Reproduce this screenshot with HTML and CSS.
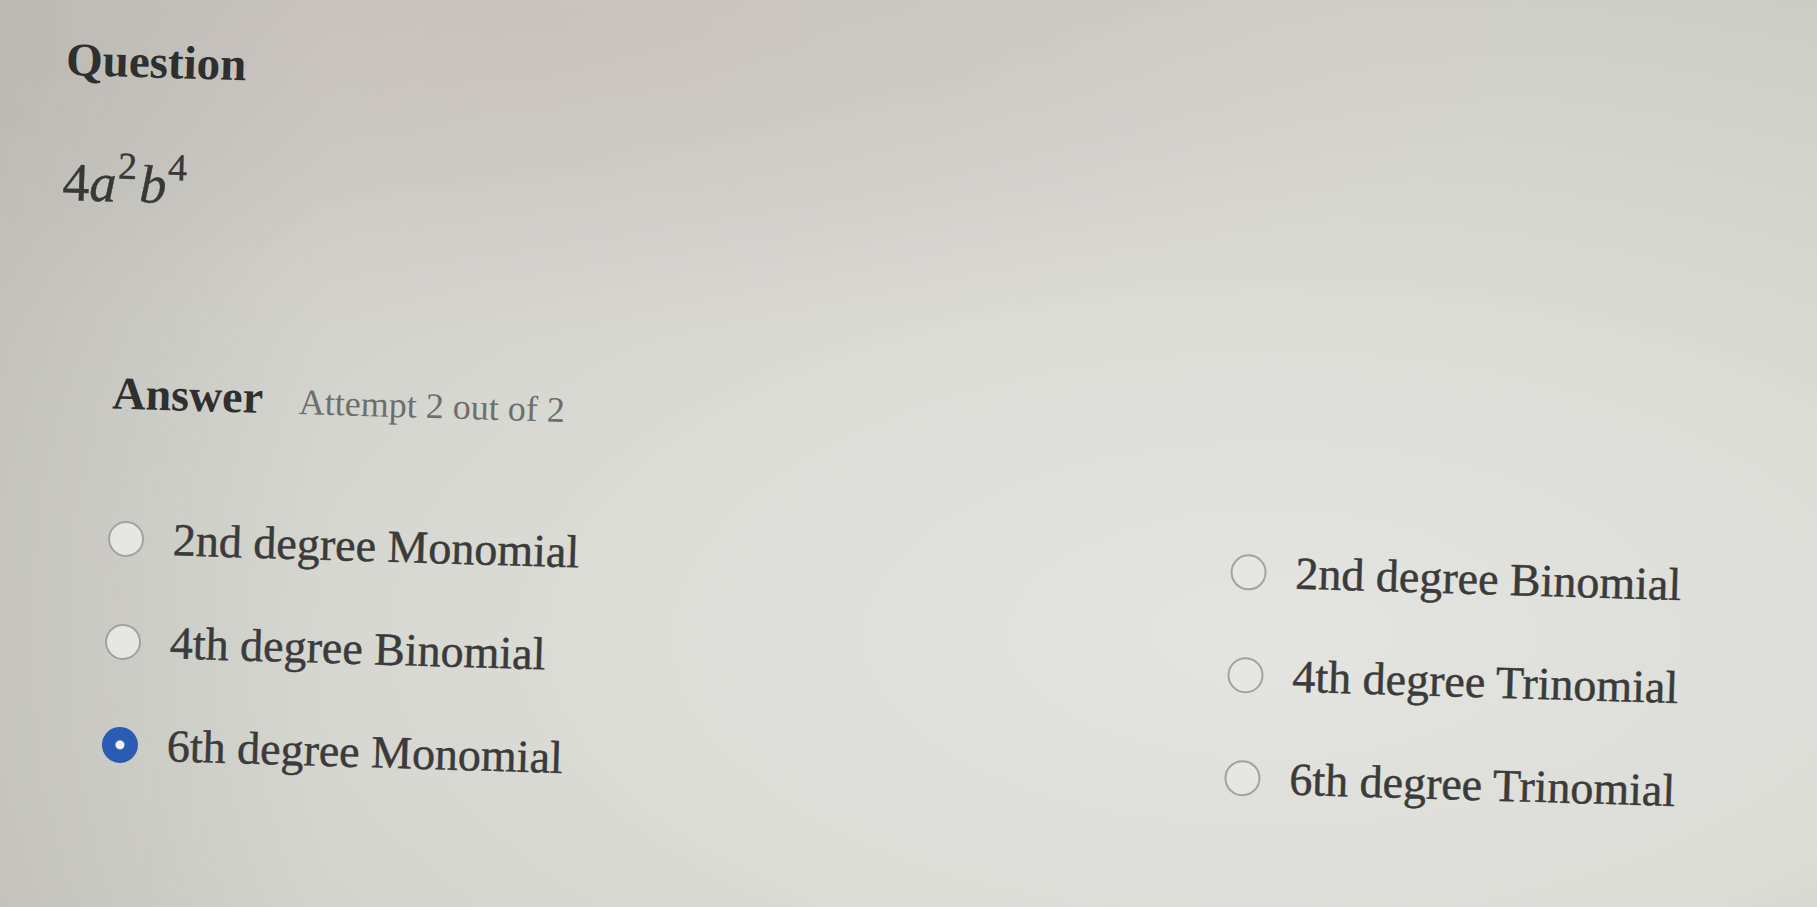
FILE: index.html
```html
<!DOCTYPE html>
<html lang="en">
<head>
<meta charset="utf-8">
<title>Question</title>
<link rel="stylesheet" href="styles.css">
</head>
<body>
<div class="page">
  <section class="question">
    <h2 class="label">Question</h2>
    <div class="math"><span class="num">4</span><i>a</i><sup>2</sup><i>b</i><sup>4</sup></div>
  </section>
  <section class="answer">
    <div class="answer-head">
      <h2 class="label">Answer</h2>
      <span class="attempt">Attempt 2 out of 2</span>
    </div>
    <div class="options">
      <label class="option"><span class="radio"></span><span class="text">2nd degree Monomial</span></label>
      <label class="option"><span class="radio"></span><span class="text">2nd degree Binomial</span></label>
      <label class="option"><span class="radio"></span><span class="text">4th degree Binomial</span></label>
      <label class="option"><span class="radio"></span><span class="text">4th degree Trinomial</span></label>
      <label class="option selected"><span class="radio"></span><span class="text">6th degree Monomial</span></label>
      <label class="option"><span class="radio"></span><span class="text">6th degree Trinomial</span></label>
    </div>
  </section>
</div>
</body>
</html>
```

FILE: styles.css
```css
html, body {
  margin: 0;
  padding: 0;
  height: 100%;
}

body {
  overflow: hidden;
  font-family: "Liberation Serif", "DejaVu Serif", serif;
  color: #353535;
  background:
    linear-gradient(90deg, rgba(160, 158, 152, 0.22) 0%, rgba(160, 158, 152, 0) 18%),
    radial-gradient(ellipse 55% 35% at 30% 3%, rgba(200, 192, 188, 0.7) 0%, rgba(200, 192, 188, 0) 100%),
    radial-gradient(ellipse 95% 90% at 70% 70%, #e4e4e0 0%, #dcdcd7 40%, #d0d0ca 75%, #c4c3bd 100%);
}

.page {
  padding: 34px 0 0 68px;
  transform: rotate(1.7deg);
  transform-origin: 0 0;
}

.label {
  margin: 0;
  font-size: 46px;
  line-height: 1;
  font-weight: 700;
  color: #2f2f2f;
}

.question .label {
  font-size: 47px;
}

.math {
  margin-top: 72px;
  font-size: 54px;
  line-height: 1;
  color: #383838;
  -webkit-text-stroke: 0.4px #383838;
}

.math i {
  font-style: italic;
}

.math sup {
  font-size: 38px;
  line-height: 0;
  vertical-align: 23px;
  margin-left: 1px;
  margin-right: 3px;
}

.answer {
  margin-top: 160px;
  padding-left: 56px;
}

.answer-head {
  display: flex;
  align-items: baseline;
  gap: 36px;
}

.attempt {
  font-size: 36px;
  line-height: 1;
  color: #6e6e6c;
}

.options {
  margin-top: 99px;
  display: grid;
  grid-template-columns: 1123px auto;
  row-gap: 57px;
}

.option {
  display: flex;
  align-items: center;
  gap: 29px;
  height: 46px;
}

.radio {
  box-sizing: border-box;
  width: 36px;
  height: 36px;
  flex: none;
  border-radius: 50%;
  border: 2px solid #a2a2a0;
  background: #e6e6e2;
}

.option.selected .radio {
  border: none;
  background: radial-gradient(circle, #f2f4fa 0, #f2f4fa 4px, #2b5bb4 5px, #2b5bb4 100%);
}

.text {
  font-size: 46px;
  line-height: 1;
  color: #3b3b3b;
  -webkit-text-stroke: 0.5px #3b3b3b;
}
```
